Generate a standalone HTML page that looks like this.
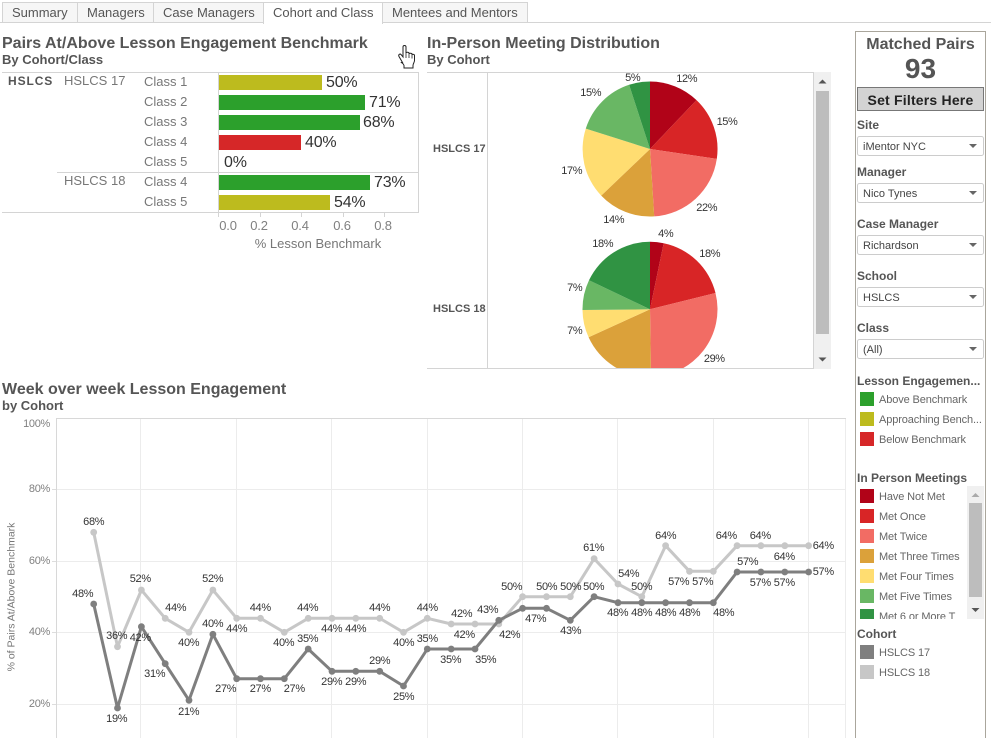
<!DOCTYPE html>
<html lang="en">
<head>
<meta charset="utf-8">
<title>Cohort and Class</title>
<style>
html,body{margin:0;padding:0;background:#fff;width:991px;height:738px;overflow:hidden}
svg{display:block}
text{font-family:"Liberation Sans",Arial,sans-serif}
.tab{font-size:13px;fill:#555}
.h1{font-size:16px;font-weight:bold;fill:#555}
.h2{font-size:13px;font-weight:bold;fill:#555}
.row{font-size:13px;fill:#777}
.bv{font-size:16px;fill:#333;letter-spacing:-.2px}
.ax{font-size:13px;fill:#808080;letter-spacing:-.2px}
.pl{font-size:11px;fill:#333;text-anchor:middle;letter-spacing:-.4px}
.ll{font-size:11px;fill:#333;text-anchor:middle;letter-spacing:-.3px}
.yl{font-size:11px;fill:#808080;text-anchor:end;letter-spacing:-.3px}
.fl{font-size:12px;font-weight:bold;fill:#555}
.sel{font-size:11px;fill:#444}
.lg{font-size:11px;fill:#666;letter-spacing:-.12px}
</style>
</head>
<body>
<svg width="991" height="738" viewBox="0 0 991 738" xmlns="http://www.w3.org/2000/svg">
<defs>
<clipPath id="pc"><rect x="488" y="73" width="325" height="295"/></clipPath>
<clipPath id="lc"><rect x="857" y="486" width="110" height="133"/></clipPath>
</defs>
<rect width="991" height="738" fill="#fff"/>

<!-- Tabs -->
<rect x="2.5" y="2.5" width="525" height="20" fill="#f6f6f6" stroke="#d4d4d4"/>
<rect x="263.5" y="2.5" width="119" height="21" fill="#fff" stroke="#d4d4d4"/>
<path d="M0 22.5H263.5M382.5 22.5H991M77.5 2.5V22.5M153.5 2.5V22.5" stroke="#d4d4d4" fill="none"/>
<rect x="264" y="21" width="118" height="3" fill="#fff"/>
<text class="tab" x="12" y="17">Summary</text>
<text class="tab" x="87" y="17">Managers</text>
<text class="tab" x="163" y="17">Case Managers</text>
<text class="tab" x="273" y="17">Cohort and Class</text>
<text class="tab" x="392" y="17">Mentees and Mentors</text>

<!-- Bar chart -->
<text class="h1" x="2" y="48">Pairs At/Above Lesson Engagement Benchmark</text>
<text class="h2" x="2" y="64">By Cohort/Class</text>
<path d="M2 72.5H418.5V212.5H2M57 172.5H418.5M218.5 72.5V217M260.5 212.5V217M301.5 212.5V217M343.5 212.5V217M384.5 212.5V217" fill="none" stroke="#d4d4d4"/>
<text x="8" y="85" font-size="12" font-weight="bold" fill="#555" letter-spacing=".9">HSLCS</text>
<text class="row" x="64" y="85">HSLCS 17</text>
<text class="row" x="64" y="185">HSLCS 18</text>
<text class="row" x="144" y="86">Class 1</text>
<text class="row" x="144" y="106">Class 2</text>
<text class="row" x="144" y="126">Class 3</text>
<text class="row" x="144" y="146">Class 4</text>
<text class="row" x="144" y="166">Class 5</text>
<text class="row" x="144" y="186">Class 4</text>
<text class="row" x="144" y="206">Class 5</text>
<rect x="219" y="75" width="103" height="15" fill="#bdbb1e"/>
<rect x="219" y="95" width="146" height="15" fill="#2ca02c"/>
<rect x="219" y="115" width="141" height="15" fill="#2ca02c"/>
<rect x="219" y="135" width="82" height="15" fill="#d62728"/>
<rect x="219" y="175" width="151" height="15" fill="#2ca02c"/>
<rect x="219" y="195" width="111" height="15" fill="#bdbb1e"/>
<text class="bv" x="326" y="87">50%</text>
<text class="bv" x="369" y="107">71%</text>
<text class="bv" x="363" y="127">68%</text>
<text class="bv" x="305" y="147">40%</text>
<text class="bv" x="224" y="167">0%</text>
<text class="bv" x="374" y="187">73%</text>
<text class="bv" x="334" y="207">54%</text>
<text class="ax" x="228" y="230" text-anchor="middle">0.0</text>
<text class="ax" x="259" y="230" text-anchor="middle">0.2</text>
<text class="ax" x="300" y="230" text-anchor="middle">0.4</text>
<text class="ax" x="342" y="230" text-anchor="middle">0.6</text>
<text class="ax" x="383" y="230" text-anchor="middle">0.8</text>
<text x="318" y="248" font-size="13" fill="#777" text-anchor="middle">% Lesson Benchmark</text>

<!-- Hand cursor -->
<path d="M402.5 62.5L399 56.5c-1-2 1-3 2-2l2 2.5V47c0-2 3-2 3 0v6c0-1 3-1 3 0v1c0-1 3-1 3 0v1c0-1 2.5-1 2.5.5v5c0 2-1.5 3-1.5 5v2.5h-9v-2.5c0-1.5-1.5-2-2.5-3z" fill="#fff" stroke="#222" stroke-width="1"/>
<path d="M406 53v5M409 54v4M412 55v3.5" stroke="#222" stroke-width=".8" fill="none"/>

<!-- Pie charts -->
<text class="h1" x="427" y="48">In-Person Meeting Distribution</text>
<text class="h2" x="427" y="64">By Cohort</text>
<path d="M427 72.5H813.5V368.500H427M487.5 72.5V368.5" fill="none" stroke="#d4d4d4"/>
<text x="433" y="152" font-size="11" font-weight="bold" fill="#555">HSLCS 17</text>
<text x="433" y="312" font-size="11" font-weight="bold" fill="#555">HSLCS 18</text>
<g clip-path="url(#pc)">
<path d="M650 149L650 81.5A67.5 67.5 0 0 1 696.5 100.1Z" fill="#b10318"/>
<path d="M650 149L696.5 100.1A67.5 67.5 0 0 1 716.8 158.9Z" fill="#d82526"/>
<path d="M650 149L716.8 158.9A67.5 67.5 0 0 1 654.2 216.4Z" fill="#f26c64"/>
<path d="M650 149L654.2 216.4A67.5 67.5 0 0 1 601.2 195.6Z" fill="#dba13a"/>
<path d="M650 149L601.2 195.6A67.5 67.5 0 0 1 585.8 128.6Z" fill="#ffdd71"/>
<path d="M650 149L585.8 128.6A67.5 67.5 0 0 1 629.1 84.8Z" fill="#69b764"/>
<path d="M650 149L629.1 84.8A67.5 67.5 0 0 1 650 81.5Z" fill="#309343"/>
<path d="M650 309.3L650 241.8A67.5 67.5 0 0 1 663.7 243.2Z" fill="#b10318"/>
<path d="M650 309.3L663.7 243.2A67.5 67.5 0 0 1 715.5 293Z" fill="#d82526"/>
<path d="M650 309.3L715.5 293A67.5 67.5 0 0 1 651 376.8Z" fill="#f26c64"/>
<path d="M650 309.3L651 376.8A67.5 67.5 0 0 1 588.6 337.3Z" fill="#dba13a"/>
<path d="M650 309.3L588.6 337.3A67.5 67.5 0 0 1 582.5 310Z" fill="#ffdd71"/>
<path d="M650 309.3L582.5 310A67.5 67.5 0 0 1 589 280.3Z" fill="#69b764"/>
<path d="M650 309.3L589 280.3A67.5 67.5 0 0 1 650 241.8Z" fill="#309343"/>
</g>
<text class="pl" x="632.7" y="81">5%</text>
<text class="pl" x="686.7" y="82">12%</text>
<text class="pl" x="727" y="125">15%</text>
<text class="pl" x="706.7" y="211">22%</text>
<text class="pl" x="613.7" y="223">14%</text>
<text class="pl" x="571.7" y="174">17%</text>
<text class="pl" x="590.7" y="96">15%</text>
<text class="pl" x="665.7" y="237">4%</text>
<text class="pl" x="709.7" y="257">18%</text>
<text class="pl" x="714.3" y="362">29%</text>
<text class="pl" x="574.7" y="334">7%</text>
<text class="pl" x="574.7" y="291">7%</text>
<text class="pl" x="602.7" y="247">18%</text>
<rect x="814" y="72" width="17" height="297" fill="#f0f0f0"/>
<rect x="816" y="91" width="13" height="243" fill="#bdbdbd"/>
<path d="M818.5 83.5L822.5 79.5L826.5 83.5Z" fill="#555"/>
<path d="M818.5 357.5L826.5 357.5L822.5 361.5Z" fill="#555"/>

<!-- Line chart -->
<text class="h1" x="2" y="394">Week over week Lesson Engagement</text>
<text class="h2" x="2" y="410">by Cohort</text>
<path d="M56 489.5H846M56 561.5H846M56 632.5H846M56 704.5H846M140.5 418V738M236.5 418V738M331.5 418V738M427.5 418V738M522.5 418V738M617.5 418V738M713.5 418V738M808.5 418V738M845.5 418V738" fill="none" stroke="#ececec"/>
<path d="M52 489.5H56M52 561.5H56M52 632.5H56M52 704.5H56" stroke="#ddd" fill="none"/>
<path d="M56.5 738V418.5H846" fill="none" stroke="#d8d8d8"/>
<text class="yl" x="50" y="427">100%</text>
<text class="yl" x="50" y="492">80%</text>
<text class="yl" x="50" y="564">60%</text>
<text class="yl" x="50" y="635">40%</text>
<text class="yl" x="50" y="707">20%</text>
<text transform="translate(14.5 597) rotate(-90)" font-size="10.5" fill="#777" text-anchor="middle">% of Pairs At/Above Benchmark</text>

<g fill="none" stroke="#c7c7c7" stroke-width="3" stroke-linejoin="round">
<polyline points="93.7,532.3 117.5,646.7 141.4,590 165.2,618.3 189,632.3 212.9,590 236.7,618.3 260.5,618.3 284.3,632.3 308.2,618.3 332,618.3 355.8,618.3 379.7,618.3 403.5,632.3 427.3,618.3 451.2,624 475,624 498.8,624 522.6,596.7 546.5,596.7 570.3,596.7 594.1,558.7 618,584 641.8,596.7 665.6,545.7 689.5,571.3 713.3,571.3 737.1,545.7 760.9,545.7 784.8,545.7 808.6,545.7"/>
</g>
<g fill="#c7c7c7">
<circle cx="93.7" cy="532.3" r="3.4"/><circle cx="117.5" cy="646.7" r="3.4"/><circle cx="141.4" cy="590" r="3.4"/><circle cx="165.2" cy="618.3" r="3.4"/><circle cx="189" cy="632.3" r="3.4"/><circle cx="212.9" cy="590" r="3.4"/><circle cx="236.7" cy="618.3" r="3.4"/><circle cx="260.5" cy="618.3" r="3.4"/><circle cx="284.3" cy="632.3" r="3.4"/><circle cx="308.2" cy="618.3" r="3.4"/><circle cx="332" cy="618.3" r="3.4"/><circle cx="355.8" cy="618.3" r="3.4"/><circle cx="379.7" cy="618.3" r="3.4"/><circle cx="403.5" cy="632.3" r="3.4"/><circle cx="427.3" cy="618.3" r="3.4"/><circle cx="451.2" cy="624" r="3.4"/><circle cx="475" cy="624" r="3.4"/><circle cx="498.8" cy="624" r="3.4"/><circle cx="522.6" cy="596.7" r="3.4"/><circle cx="546.5" cy="596.7" r="3.4"/><circle cx="570.3" cy="596.7" r="3.4"/><circle cx="594.1" cy="558.7" r="3.4"/><circle cx="618" cy="584" r="3.4"/><circle cx="641.8" cy="596.7" r="3.4"/><circle cx="665.6" cy="545.7" r="3.4"/><circle cx="689.5" cy="571.3" r="3.4"/><circle cx="713.3" cy="571.3" r="3.4"/><circle cx="737.1" cy="545.7" r="3.4"/><circle cx="760.9" cy="545.7" r="3.4"/><circle cx="784.8" cy="545.7" r="3.4"/><circle cx="808.6" cy="545.7" r="3.4"/>
</g>
<g fill="none" stroke="#7f7f7f" stroke-width="3" stroke-linejoin="round">
<polyline points="93.7,604 117.5,708 141.4,626.7 165.2,663.7 189,700.3 212.9,634.3 236.7,678.7 260.5,678.7 284.3,678.7 308.2,649 332,671.3 355.8,671.3 379.7,671.3 403.5,686 427.3,649 451.2,649 475,649 498.8,620.3 522.6,608.3 546.5,608.3 570.3,620.3 594.1,596.7 618,602.7 641.8,602.7 665.6,602.7 689.5,602.7 713.3,602.7 737.1,572 760.9,572 784.8,572 808.6,572"/>
</g>
<g fill="#7f7f7f">
<circle cx="93.7" cy="604" r="3.4"/><circle cx="117.5" cy="708" r="3.4"/><circle cx="141.4" cy="626.7" r="3.4"/><circle cx="165.2" cy="663.7" r="3.4"/><circle cx="189" cy="700.3" r="3.4"/><circle cx="212.9" cy="634.3" r="3.4"/><circle cx="236.7" cy="678.7" r="3.4"/><circle cx="260.5" cy="678.7" r="3.4"/><circle cx="284.3" cy="678.7" r="3.4"/><circle cx="308.2" cy="649" r="3.4"/><circle cx="332" cy="671.3" r="3.4"/><circle cx="355.8" cy="671.3" r="3.4"/><circle cx="379.7" cy="671.3" r="3.4"/><circle cx="403.5" cy="686" r="3.4"/><circle cx="427.3" cy="649" r="3.4"/><circle cx="451.2" cy="649" r="3.4"/><circle cx="475" cy="649" r="3.4"/><circle cx="498.8" cy="620.3" r="3.4"/><circle cx="522.6" cy="608.3" r="3.4"/><circle cx="546.5" cy="608.3" r="3.4"/><circle cx="570.3" cy="620.3" r="3.4"/><circle cx="594.1" cy="596.7" r="3.4"/><circle cx="618" cy="602.7" r="3.4"/><circle cx="641.8" cy="602.7" r="3.4"/><circle cx="665.6" cy="602.7" r="3.4"/><circle cx="689.5" cy="602.7" r="3.4"/><circle cx="713.3" cy="602.7" r="3.4"/><circle cx="737.1" cy="572" r="3.4"/><circle cx="760.9" cy="572" r="3.4"/><circle cx="784.8" cy="572" r="3.4"/><circle cx="808.6" cy="572" r="3.4"/>
</g>

<text class="ll" x="93.7" y="525">68%</text>
<text class="ll" x="82.7" y="597">48%</text>
<text class="ll" x="116.7" y="639">36%</text>
<text class="ll" x="140.3" y="641">42%</text>
<text class="ll" x="116.7" y="722">19%</text>
<text class="ll" x="140.3" y="582">52%</text>
<text class="ll" x="175.7" y="611">44%</text>
<text class="ll" x="154.7" y="677">31%</text>
<text class="ll" x="188.7" y="646">40%</text>
<text class="ll" x="188.7" y="715">21%</text>
<text class="ll" x="212.7" y="582">52%</text>
<text class="ll" x="212.7" y="627">40%</text>
<text class="ll" x="236.7" y="632">44%</text>
<text class="ll" x="225.7" y="692">27%</text>
<text class="ll" x="260.3" y="611">44%</text>
<text class="ll" x="260.3" y="692">27%</text>
<text class="ll" x="283.7" y="646">40%</text>
<text class="ll" x="294.3" y="692">27%</text>
<text class="ll" x="307.7" y="611">44%</text>
<text class="ll" x="307.7" y="642">35%</text>
<text class="ll" x="331.7" y="632">44%</text>
<text class="ll" x="331.7" y="685">29%</text>
<text class="ll" x="355.7" y="632">44%</text>
<text class="ll" x="355.7" y="685">29%</text>
<text class="ll" x="379.7" y="611">44%</text>
<text class="ll" x="379.7" y="664">29%</text>
<text class="ll" x="403.7" y="646">40%</text>
<text class="ll" x="403.7" y="700">25%</text>
<text class="ll" x="427.3" y="611">44%</text>
<text class="ll" x="427.3" y="642">35%</text>
<text class="ll" x="461.7" y="617">42%</text>
<text class="ll" x="464.3" y="638">42%</text>
<text class="ll" x="487.7" y="613">43%</text>
<text class="ll" x="509.7" y="638">42%</text>
<text class="ll" x="450.7" y="663">35%</text>
<text class="ll" x="485.7" y="663">35%</text>
<text class="ll" x="511.7" y="590">50%</text>
<text class="ll" x="535.7" y="622">47%</text>
<text class="ll" x="546.7" y="590">50%</text>
<text class="ll" x="570.7" y="590">50%</text>
<text class="ll" x="570.7" y="634">43%</text>
<text class="ll" x="593.7" y="590">50%</text>
<text class="ll" x="593.7" y="551">61%</text>
<text class="ll" x="628.7" y="577">54%</text>
<text class="ll" x="641.7" y="590">50%</text>
<text class="ll" x="617.7" y="616">48%</text>
<text class="ll" x="641.7" y="616">48%</text>
<text class="ll" x="665.7" y="616">48%</text>
<text class="ll" x="689.7" y="616">48%</text>
<text class="ll" x="723.7" y="616">48%</text>
<text class="ll" x="665.7" y="539">64%</text>
<text class="ll" x="678.7" y="585">57%</text>
<text class="ll" x="702.7" y="585">57%</text>
<text class="ll" x="726.3" y="539">64%</text>
<text class="ll" x="747.7" y="565">57%</text>
<text class="ll" x="760.3" y="539">64%</text>
<text class="ll" x="760.3" y="586">57%</text>
<text class="ll" x="784.3" y="560">64%</text>
<text class="ll" x="784.3" y="586">57%</text>
<text class="ll" x="823.3" y="549">64%</text>
<text class="ll" x="823.3" y="575">57%</text>

<!-- Sidebar -->
<path d="M855.5 738V31.5H985.5V738" fill="none" stroke="#aaa69c"/>
<text x="920.5" y="49" font-size="16" font-weight="bold" fill="#555" text-anchor="middle">Matched Pairs</text>
<text x="920.5" y="78" font-size="28" font-weight="bold" fill="#555" text-anchor="middle">93</text>
<rect x="857.5" y="87.5" width="126" height="23" fill="#d3d3d3" stroke="#777"/>
<text x="920.5" y="105" font-size="14" font-weight="bold" fill="#222" text-anchor="middle" letter-spacing=".2">Set Filters Here</text>

<text class="fl" x="857" y="129">Site</text>
<rect x="857.5" y="136.5" width="126" height="19" rx="2" fill="#fff" stroke="#ccc"/>
<text class="sel" x="863" y="150">iMentor NYC</text>
<path d="M969 144L977 144L973 148Z" fill="#666"/>

<text class="fl" x="857" y="176">Manager</text>
<rect x="857.5" y="183.5" width="126" height="19" rx="2" fill="#fff" stroke="#ccc"/>
<text class="sel" x="863" y="197">Nico Tynes</text>
<path d="M969 191L977 191L973 195Z" fill="#666"/>

<text class="fl" x="857" y="228">Case Manager</text>
<rect x="857.5" y="235.5" width="126" height="19" rx="2" fill="#fff" stroke="#ccc"/>
<text class="sel" x="863" y="249">Richardson</text>
<path d="M969 243L977 243L973 247Z" fill="#666"/>

<text class="fl" x="857" y="280">School</text>
<rect x="857.5" y="287.5" width="126" height="19" rx="2" fill="#fff" stroke="#ccc"/>
<text class="sel" x="863" y="301">HSLCS</text>
<path d="M969 295L977 295L973 299Z" fill="#666"/>

<text class="fl" x="857" y="332">Class</text>
<rect x="857.5" y="339.5" width="126" height="19" rx="2" fill="#fff" stroke="#ccc"/>
<text class="sel" x="863" y="353">(All)</text>
<path d="M969 347L977 347L973 351Z" fill="#666"/>

<text class="fl" x="857" y="385">Lesson Engagemen...</text>
<rect x="860" y="392" width="14" height="14" fill="#2ca02c"/>
<rect x="860" y="412" width="14" height="14" fill="#bdbb1e"/>
<rect x="860" y="432" width="14" height="14" fill="#d62728"/>
<text class="lg" x="879" y="403">Above Benchmark</text>
<text class="lg" x="879" y="423">Approaching Bench...</text>
<text class="lg" x="879" y="443">Below Benchmark</text>

<text class="fl" x="857" y="482">In Person Meetings</text>
<g clip-path="url(#lc)">
<rect x="860" y="489" width="14" height="14" fill="#b10318"/>
<rect x="860" y="509" width="14" height="14" fill="#d82526"/>
<rect x="860" y="529" width="14" height="14" fill="#f26c64"/>
<rect x="860" y="549" width="14" height="14" fill="#dba13a"/>
<rect x="860" y="569" width="14" height="14" fill="#ffdd71"/>
<rect x="860" y="589" width="14" height="14" fill="#69b764"/>
<rect x="860" y="609" width="14" height="14" fill="#309343"/>
<text class="lg" x="879" y="500">Have Not Met</text>
<text class="lg" x="879" y="520">Met Once</text>
<text class="lg" x="879" y="540">Met Twice</text>
<text class="lg" x="879" y="560">Met Three Times</text>
<text class="lg" x="879" y="580">Met Four Times</text>
<text class="lg" x="879" y="600">Met Five Times</text>
<text class="lg" x="879" y="620">Met 6 or More T</text>
</g>
<rect x="967" y="486" width="17" height="133" fill="#f0f0f0"/>
<rect x="969" y="503" width="13" height="94" fill="#bdbdbd"/>
<path d="M971.5 497L975.5 493L979.5 497Z" fill="#aaa"/>
<path d="M971.5 608L979.5 608L975.5 612Z" fill="#555"/>

<text class="fl" x="857" y="638">Cohort</text>
<rect x="860" y="645" width="14" height="14" fill="#7f7f7f"/>
<rect x="860" y="665" width="14" height="14" fill="#c7c7c7"/>
<text class="lg" x="879" y="656">HSLCS 17</text>
<text class="lg" x="879" y="676">HSLCS 18</text>
</svg>
</body>
</html>
